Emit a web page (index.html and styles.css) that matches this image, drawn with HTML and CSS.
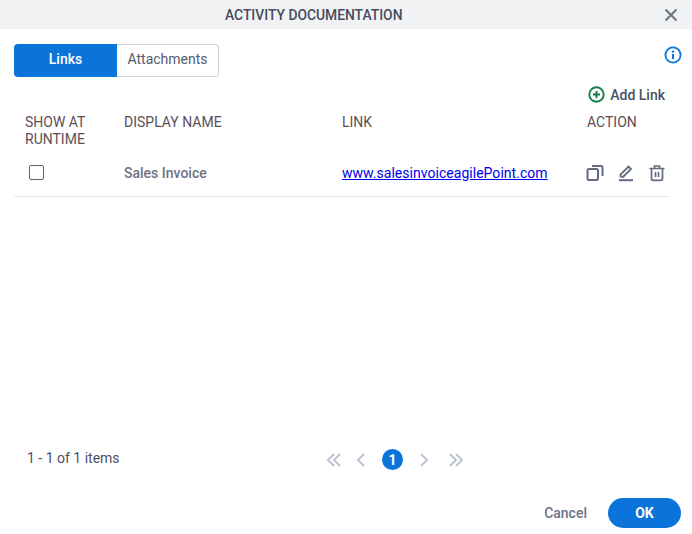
FILE: index.html
```html
<!DOCTYPE html>
<html lang="en">
<head>
    <meta charset="UTF-8">
    <title>Activity Documentation</title>
    <link rel="stylesheet" href="styles.css">
</head>
<body>
    <div class="dialog">
        <div class="title-bar">
            <span class="title">ACTIVITY DOCUMENTATION</span>
            <svg class="close" width="14" height="14" viewBox="0 0 14 14"><path d="M1.500 1.500l11 11M12.500 1.500l-11 11" stroke="#6c7280" stroke-width="2" fill="none"/></svg>
        </div>

        <div class="content">
            <div class="tab-row">
                <div class="tabs">
                    <div class="tab tab-active">Links</div>
                    <div class="tab">Attachments</div>
                </div>
                <svg class="info" width="18" height="18" viewBox="0 0 18 18">
                    <circle cx="9" cy="9" r="7.6" stroke="#0a74da" stroke-width="1.8" fill="none"/>
                    <circle cx="9" cy="5.6" r="1.2" fill="#0a74da"/>
                    <path d="M9 8v5" stroke="#0a74da" stroke-width="2"/>
                </svg>
            </div>

            <div class="add-row">
                <div class="add-link">
                    <svg width="17" height="17" viewBox="0 0 17 17">
                        <circle cx="8.5" cy="8.5" r="7.2" stroke="#0f8043" stroke-width="1.9" fill="none"/>
                        <path d="M8.5 5v7M5 8.5h7" stroke="#0f8043" stroke-width="1.9"/>
                    </svg>
                    <span>Add Link</span>
                </div>
            </div>

            <div class="table">
                <div class="row head-row">
                    <div class="col-show">SHOW AT RUNTIME</div>
                    <div class="col-name">DISPLAY NAME</div>
                    <div class="col-link">LINK</div>
                    <div class="col-action">ACTION</div>
                </div>
                <div class="row body-row">
                    <div class="col-show"><span class="checkbox"></span></div>
                    <div class="col-name name-cell">Sales Invoice</div>
                    <div class="col-link"><a href="#">www.salesinvoiceagilePoint.com</a></div>
                    <div class="col-action actions">
                        <svg width="18" height="18" viewBox="0 0 18 18" fill="none" stroke="#636b80" stroke-width="2">
                            <rect x="1.500" y="5" width="10.500" height="11" rx="1.500"/>
                            <path d="M6 2h9a1.500 1.500 0 0 1 1.500 1.500V12"/>
                        </svg>
                        <svg width="18" height="18" viewBox="0 0 18 18" fill="none" stroke="#636b80" stroke-width="1.800">
                            <path d="M3.500 12.500v-2L11.500 2.500l2.500 2.500L6 13z"/>
                            <path d="M2 16.200h14" stroke-width="2"/>
                        </svg>
                        <svg width="18" height="18" viewBox="0 0 18 18" fill="none" stroke="#636b80" stroke-width="1.700">
                            <path d="M1.500 4.500h15M6.500 4.500V2h5v2.500"/>
                            <path d="M3.500 4.500v10a1.800 1.800 0 0 0 1.800 1.800h7.400a1.800 1.800 0 0 0 1.800-1.800v-10"/>
                            <path d="M7.500 8v5M10.500 8v5"/>
                        </svg>
                    </div>
                </div>
            </div>

            <div class="pager-row">
                <div class="pager-info">1 - 1 of 1 items</div>
                <div class="pager">
                    <svg width="16" height="14" viewBox="0 0 16 14" fill="none" stroke="#bfc4d2" stroke-width="2"><path d="M8 1L2 7l6 6M14 1L8 7l6 6"/></svg>
                    <svg width="10" height="14" viewBox="0 0 10 14" fill="none" stroke="#bfc4d2" stroke-width="2"><path d="M8 1L2 7l6 6"/></svg>
                    <span class="page-num">1</span>
                    <svg width="10" height="14" viewBox="0 0 10 14" fill="none" stroke="#bfc4d2" stroke-width="2"><path d="M2 1l6 6-6 6"/></svg>
                    <svg class="pager-last" width="16" height="14" viewBox="0 0 16 14" fill="none" stroke="#bfc4d2" stroke-width="2"><path d="M2 1l6 6-6 6M8 1l6 6-6 6"/></svg>
                </div>
            </div>

            <div class="footer">
                <span class="cancel">Cancel</span>
                <button class="ok">OK</button>
            </div>
        </div>
    </div>
</body>
</html>
```

FILE: styles.css
```css
* {
    margin: 0;
    padding: 0;
    box-sizing: border-box;
}
body {
    background: white;
    font-family: Roboto, sans-serif;
    font-size: 14px;
    color: #4a5068;
}
.dialog {
    width: 692px;
    height: 534px;
    display: flex;
    flex-direction: column;
    overflow: hidden;
}
.title-bar {
    height: 29px;
    flex-shrink: 0;
    background-color: #f1f2f4;
    display: flex;
    align-items: center;
    justify-content: space-between;
    padding: 0 14px 0 225px;
}
.title {
    font-weight: 500;
    font-size: 13.85px;
    color: #464c5e;
}
.content {
    flex-grow: 1;
    display: flex;
    flex-direction: column;
    padding: 15px 11px 6px 14px;
}
.tab-row {
    display: flex;
    justify-content: space-between;
    align-items: flex-start;
}
.tabs {
    display: flex;
    height: 33px;
}
.tab {
    width: 102px;
    padding-bottom: 3px;
    display: flex;
    align-items: center;
    justify-content: center;
    border: 1px solid #d0d3de;
    border-left: none;
    border-radius: 0 4px 4px 0;
    color: #555b6e;
}
.tab-active {
    width: 103px;
    background-color: #0a74da;
    border: none;
    border-radius: 4px 0 0 4px;
    color: white;
    font-weight: 500;
}
.info {
    margin-top: 2px;
    margin-right: -1px;
}
.add-row {
    display: flex;
    justify-content: flex-end;
    padding: 9px 16px 0 0;
}
.add-link {
    display: flex;
    align-items: center;
    gap: 5px;
    font-weight: 500;
    color: #4a5068;
}
.table {
    width: 655px;
    margin-top: 11px;
}
.row {
    display: flex;
}
.head-row {
    line-height: 17px;
    color: #5b4f55;
}
.body-row {
    height: 49px;
    padding-top: 1px;
    align-items: center;
    border-bottom: 1px solid #e8e9ee;
}
.col-show {
    width: 110px;
    padding-left: 11px;
}
.head-row .col-show {
    padding-right: 20px;
}
.col-name {
    width: 218px;
}
.name-cell {
    font-weight: 500;
    color: #6c7285;
}
.col-link {
    width: 245px;
}
.col-link a {
    color: #0000ee;
    letter-spacing: 0.03px;
}
.checkbox {
    display: block;
    width: 15px;
    height: 15px;
    margin-left: 4px;
    border: 1px solid #5f6475;
    border-radius: 2px;
}
.actions {
    display: flex;
    gap: 13px;
    margin-left: -1px;
}
.pager-row {
    display: flex;
    align-items: flex-start;
    margin-top: 252px;
    padding-left: 13px;
}
.pager-info {
    width: 299px;
    margin-top: 1px;
}
.pager {
    display: flex;
    align-items: center;
    gap: 14px;
}
.page-num {
    width: 21px;
    height: 21px;
    margin: 0 2px 0 2px;
    border-radius: 50%;
    background-color: #0a74da;
    color: white;
    font-weight: 700;
    display: flex;
    align-items: center;
    justify-content: center;
}
.pager-last {
    margin-left: 5px;
}
.footer {
    display: flex;
    justify-content: flex-end;
    align-items: center;
    gap: 21px;
    margin-top: 28px;
}
.cancel {
    font-weight: 500;
    color: #6c7285;
}
.ok {
    width: 73px;
    height: 30px;
    border: none;
    border-radius: 15px;
    background-color: #0a74da;
    color: white;
    font-family: Roboto, sans-serif;
    font-weight: 700;
    font-size: 14px;
}
```
